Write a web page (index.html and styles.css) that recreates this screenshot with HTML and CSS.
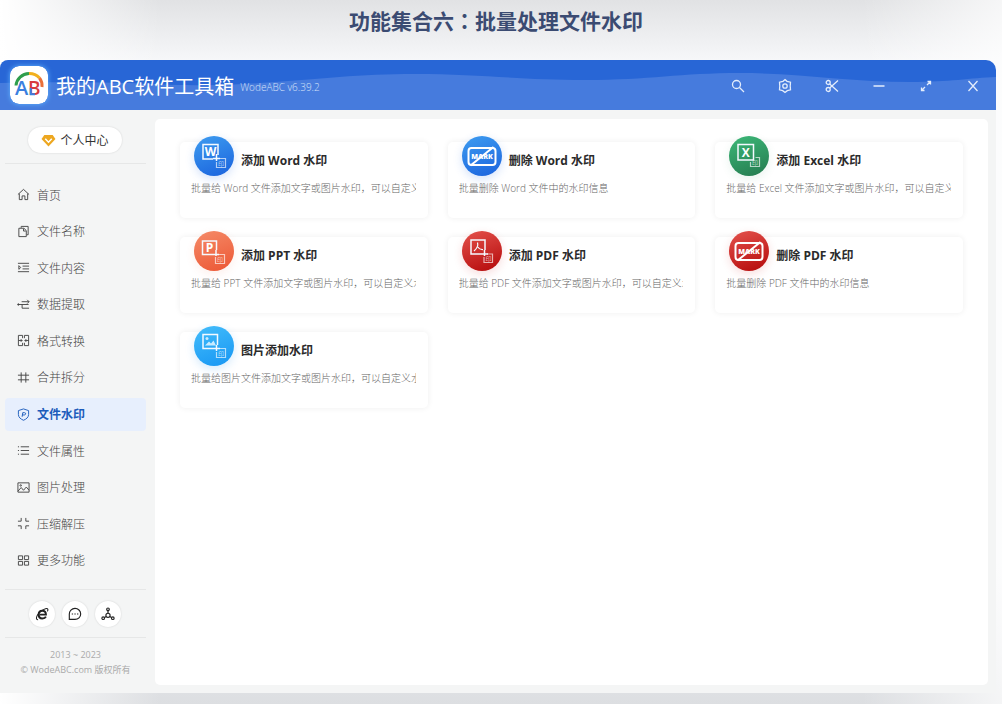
FILE: index.html
```html
<!DOCTYPE html>
<html lang="zh-CN">
<head>
  <meta charset="UTF-8">
  <meta name="viewport" content="width=device-width, initial-scale=1">
  <title>我的ABC软件工具箱</title>
  <link rel="stylesheet" href="styles.css">
</head>
<body>

  <h1 class="page-title">功能集合六<span class="colon" lang="zh-TW">：</span>批量处理文件水印</h1>

  <div class="window">
    <header class="titlebar">
      <svg class="wave" viewBox="0 0 996 50" preserveAspectRatio="none" aria-hidden="true">
        <path d="M0 23C60 22 90 22 130 23C190 26 220 26 260 23C320 19 360 14 415 14C480 14 520 20 585 20C650 20 680 13 740 13C800 13 850 22 910 22C950 22 970 18 996 17V50H0Z"/>
      </svg>
      <svg class="logo" viewBox="0 0 38 38" aria-hidden="true">
        <rect width="38" height="38" rx="9" fill="#fff"/>
        <g fill="none" stroke-width="3">
          <path d="M6 19.500A13.500 13 0 0 1 19 7.500" stroke="#2f9e4d"/>
          <path d="M19 7.500A13.500 13 0 0 1 29.500 12" stroke="#f2b01e"/>
          <path d="M29.500 12A13.500 13 0 0 1 32 21" stroke="#e8703a"/>
        </g>
        <text x="5" y="29" font-size="20" fill="#3b7fe0">A</text>
        <text x="18" y="29" font-size="19" fill="#d83b3f">B</text>
        <path d="M20.800 22V28.200H25" fill="none" stroke="#3b7fe0" stroke-width="2"/>
      </svg>
      <strong class="app-name">我的ABC软件工具箱</strong>
      <span class="version">WodeABC v6.39.2</span>
      <div class="tools">
        <button type="button" aria-label="搜索"><svg viewBox="0 0 16 16"><circle cx="6.500" cy="6.500" r="4"/><path d="M9.500 9.500L14 14"/></svg></button>
        <button type="button" aria-label="设置"><svg viewBox="0 0 16 16"><path d="M8 1.500L10 3.300L13.500 4.200L13.200 8L13.500 11.800L10.300 12.700L8 14.500L5.700 12.700L2.500 11.800L2.800 8L2.500 4.200L6 3.300Z"/><circle cx="8" cy="8" r="2.200"/></svg></button>
        <button type="button" aria-label="截图"><svg viewBox="0 0 16 16"><circle cx="4.200" cy="4.500" r="2"/><circle cx="4.200" cy="11.500" r="2"/><path d="M5.700 6L14 13.500M5.700 10L14 2.500"/></svg></button>
        <button type="button" aria-label="最小化"><svg viewBox="0 0 16 16"><path d="M2.500 8H13.500"/></svg></button>
        <button type="button" aria-label="最大化"><svg viewBox="0 0 16 16"><path d="M9.500 9.500" /><path d="M9.500 3.500H12.500V6.500M12.500 3.500L9 7M6.500 12.500H3.500V9.500M3.500 12.500L7 9"/></svg></button>
        <button type="button" aria-label="关闭"><svg viewBox="0 0 16 16"><path d="M3.500 3L12.500 13M12.500 3L3.500 13"/></svg></button>
      </div>
    </header>

    <div class="content">
      <aside class="sidebar">
        <div class="account">
          <button type="button" class="account-btn">
            <svg viewBox="0 0 16 14" aria-hidden="true"><path d="M3.500 1H12.500L15.500 5.500L8 13.500L0.500 5.500Z" fill="#eda720"/><path d="M4.500 5L8 8.800L11.500 5" fill="none" stroke="#fff" stroke-width="1.600"/></svg>
            个人中心
          </button>
        </div>

        <nav class="menu">
          <a href="#"><svg viewBox="0 0 14 14"><path d="M1 7L7 1.500L13 7M2.500 6V12.500H5.500V8.500H8.500V12.500H11.500V6"/></svg>首页</a>
          <a href="#"><svg viewBox="0 0 14 14"><path d="M4.500 3V1.500H12V10.500H10.500M2 3.500H7.500L10 6V12.500H2ZM7 4V6.500H9.500"/></svg>文件名称</a>
          <a href="#"><svg viewBox="0 0 14 14"><path d="M1 2.500H13M6 5.500H13M6 8.500H13M1 11.500H13M2 5L4 7L2 9Z"/></svg>文件内容</a>
          <a href="#"><svg viewBox="0 0 14 14"><path d="M1 7H12.500M5 4H13M11 2L13 4L11 6M5.500 7V11H13"/><circle cx="1.500" cy="7" r="0.800"/></svg>数据提取</a>
          <a href="#"><svg viewBox="0 0 14 14"><path d="M6 4.500V1.500H1.500V12.500H6V9.500M8 4.500V1.500H12.500V12.500H8V9.500M1.500 7H5.500M4 5.500L5.500 7L4 8.500M12.500 7H8.500M10 5.500L8.500 7L10 8.500"/></svg>格式转换</a>
          <a href="#"><svg viewBox="0 0 14 14"><path d="M4.500 1.500V12.500M9.500 1.500V12.500M1 4.500H13M1 9.500H13"/></svg>合并拆分</a>
          <a href="#" class="active" aria-current="page"><svg viewBox="0 0 14 14"><path d="M7 1L12.500 2.800V7C12.500 10 10 12 7 13.200C4 12 1.500 10 1.500 7V2.800ZM5.500 9.500L6.200 5H8C10 5 9.500 7.500 8 7.500H5.500"/></svg>文件水印</a>
          <a href="#"><svg viewBox="0 0 14 14"><path d="M4 3H13M4 7H13M4 11H13M1 3H2.200M1 7H2.200M1 11H2.200"/></svg>文件属性</a>
          <a href="#"><svg viewBox="0 0 14 14"><path d="M1 2H13V12H1ZM1 11L4.500 7L7 10L10 6.500L13 10"/><circle cx="4" cy="4.800" r="0.800"/></svg>图片处理</a>
          <a href="#"><svg viewBox="0 0 14 14"><path d="M4.500 1V4.500H1M9.500 1V4.500H13M4.500 13V9.500H1M9.500 13V9.500H13"/></svg>压缩解压</a>
          <a href="#"><svg viewBox="0 0 14 14"><path d="M1.500 2H6V6H1.500ZM8 2H12.500V6H8ZM1.500 8H6V12H1.500ZM8 8H12.500V12H8Z"/></svg>更多功能</a>
        </nav>

        <div class="links">
          <button type="button" aria-label="官网"><svg viewBox="0 0 16 16"><path d="M12.500 11C11.800 12.500 10.200 13.200 8.300 13.200C5.800 13.200 4.200 11.500 4.200 8.600C4.200 5.800 5.800 4.200 8.300 4.200C10.800 4.200 12.500 5.800 12.500 8.700H5.500" fill="none" stroke="#222" stroke-width="2.200"/><path d="M3.500 14.500C-1 15 3 5 12 2C15 1.300 15.500 3 14 5" fill="none" stroke="#222" stroke-width="1.200"/></svg></button>
          <button type="button" aria-label="客服"><svg viewBox="0 0 16 16"><path d="M1.500 14.200V8A6.500 6.300 0 1 1 8 14.200Z" fill="none" stroke="#222" stroke-width="1.300"/><path d="M4.300 8H5.800M7.300 8H8.800M10.300 8H11.800" stroke="#222" stroke-width="1.400"/></svg></button>
          <button type="button" aria-label="分享"><svg viewBox="0 0 16 16"><g fill="none" stroke="#222" stroke-width="1.300"><circle cx="8" cy="2.700" r="1.500"/><circle cx="2.500" cy="12.800" r="1.500"/><circle cx="13.500" cy="12.800" r="1.500"/><circle cx="8" cy="9.500" r="2.400"/><path d="M8 4V7M6 11L3.800 12M10 11L12.200 12"/></g></svg></button>
        </div>

        <footer class="copyright">
          <div>2013 ~ 2023</div>
          <div>© WodeABC.com 版权所有</div>
        </footer>
      </aside>

      <main class="panel">
        <article class="card">
          <div class="card-head">
            <svg class="badge word" viewBox="0 0 40 40" aria-hidden="true">
              <path class="frame" d="M24 19V8.500H9V23H19"/>
              <text class="letter" x="16.500" y="20">W</text>
              <path class="frame" d="M22.500 18V25M19 22.500H26"/>
              <path class="stamp" d="M26 22.500H31.500V31.500H22.500V26"/>
              <text class="seal" x="27" y="30">印</text>
            </svg>
            <h2>添加 Word 水印</h2>
          </div>
          <p>批量给 Word 文件添加文字或图片水印，可以自定义水印的位置</p>
        </article>

        <article class="card">
          <div class="card-head">
            <svg class="badge word" viewBox="0 0 40 40" aria-hidden="true">
              <rect class="mark-box" x="6.500" y="12" width="27" height="17" rx="3"/>
              <text class="mark" x="20" y="23">MARK</text>
              <path class="mark-box" d="M8.500 29.500L31.500 11"/>
            </svg>
            <h2>删除 Word 水印</h2>
          </div>
          <p>批量删除 Word 文件中的水印信息</p>
        </article>

        <article class="card">
          <div class="card-head">
            <svg class="badge excel" viewBox="0 0 40 40" aria-hidden="true">
              <path class="frame" d="M9 8.500H24.500V24H9Z"/>
              <text class="letter" x="16.800" y="21">X</text>
              <path class="stamp" d="M26.500 21.500H30.500V30.500H21.500V26"/>
              <text class="seal" x="26" y="29">印</text>
            </svg>
            <h2>添加 Excel 水印</h2>
          </div>
          <p>批量给 Excel 文件添加文字或图片水印，可以自定义水印的位置</p>
        </article>

        <article class="card">
          <div class="card-head">
            <svg class="badge ppt" viewBox="0 0 40 40" aria-hidden="true">
              <path class="frame" d="M22.500 19V10H8.500V23.500H19"/>
              <text class="letter" x="15.500" y="21">P</text>
              <path class="frame" d="M22 19V25M19 23.500H25"/>
              <path class="stamp" d="M25 23.500H30.500V32.500H21.500V26"/>
              <text class="seal" x="26" y="31">印</text>
            </svg>
            <h2>添加 PPT 水印</h2>
          </div>
          <p>批量给 PPT 文件添加文字或图片水印，可以自定义水印的位置</p>
        </article>

        <article class="card">
          <div class="card-head">
            <svg class="badge pdf" viewBox="0 0 40 40" aria-hidden="true">
              <path class="frame" d="M23 19V9H9V23H19"/>
              <path class="thin" d="M15.500 11.500C16.500 15 15.500 17 12 20M15.800 16C17 18 18.500 18.700 21 18.500"/>
              <path class="frame" d="M22.500 19V25M19 23H26"/>
              <path class="stamp" d="M25 23H30.500V31.500H22V26"/>
              <text class="seal" x="26.500" y="30">印</text>
            </svg>
            <h2>添加 PDF 水印</h2>
          </div>
          <p>批量给 PDF 文件添加文字或图片水印，可以自定义水印的位置</p>
        </article>

        <article class="card">
          <div class="card-head">
            <svg class="badge pdf" viewBox="0 0 40 40" aria-hidden="true">
              <rect class="mark-box" x="6.500" y="12" width="27" height="17" rx="3"/>
              <text class="mark" x="20" y="23">MARK</text>
              <path class="mark-box" d="M8.500 29.500L31.500 11"/>
            </svg>
            <h2>删除 PDF 水印</h2>
          </div>
          <p>批量删除 PDF 文件中的水印信息</p>
        </article>

        <article class="card">
          <div class="card-head">
            <svg class="badge image" viewBox="0 0 40 40" aria-hidden="true">
              <path class="frame" d="M23.500 19V8.500H9V22.500H19"/>
              <path d="M11 19.500L15 15.500L17 17.500L19.500 14.500L22 19.500Z" fill="#c9ebff"/>
              <circle cx="13" cy="12.500" r="1.500" fill="#c9ebff"/>
              <path class="frame" d="M22.500 19V25M19 22.500H26"/>
              <path class="stamp" d="M26 22.500H31.500V31.500H22.500V26"/>
              <text class="seal" x="27" y="30">印</text>
            </svg>
            <h2>图片添加水印</h2>
          </div>
          <p>批量给图片文件添加文字或图片水印，可以自定义水印的位置</p>
        </article>
      </main>
    </div>
  </div>

</body>
</html>
```
FILE: styles.css
```css
* {
  box-sizing: border-box;
}
body {
  display: flex;
  flex-direction: column;
  min-height: 100vh;
  margin: 0;
  padding: 0 6px 11px 0;
  font-family: "Open Sans", "Noto Sans CJK SC", sans-serif;
  font-size: 12px;
  color: #666;
  background:
    linear-gradient(to right, #fff, rgba(255,255,255,0) 16%, rgba(255,255,255,0) 86%, rgba(255,255,255,0.7)),
    linear-gradient(to bottom, #e1e2e4, #f6f7f9 60px, #f6f7f9 80%, #dcdee1);
}
button {
  font-family: inherit;
  border: none;
  padding: 0;
  cursor: pointer;
}
.page-title {
  height: 60px;
  margin: 0;
  padding: 5px 4px 0 0;
  font-size: 21px;
  line-height: 30px;
  text-align: center;
  color: #3b4b72;
}
.colon {
  font-family: "Noto Sans CJK TC", sans-serif;
}
.window {
  flex: 1;
  display: flex;
  flex-direction: column;
  border-radius: 8px 10px 0 0;
  overflow: hidden;
  background-color: #f4f5f5;
}

/* title bar */
.titlebar {
  position: relative;
  display: flex;
  align-items: center;
  height: 50px;
  padding: 0 11px 0 10px;
  background-color: #2866d6;
  color: #fff;
}
.wave {
  position: absolute;
  inset: 0;
  width: 100%;
  height: 100%;
  fill: #467bdd;
}
.logo, .app-name, .version, .tools {
  position: relative;
}
.logo {
  width: 38px;
  height: 38px;
  border-radius: 9px;
  box-shadow: 0 0 5px #5fb4ff;
  font-family: "Open Sans", sans-serif;
  font-weight: 600;
}
.app-name {
  margin-left: 8px;
  font-size: 20px;
  font-weight: 400;
}
.version {
  margin-left: 6px;
  padding-top: 3px;
  font-size: 10px;
  font-weight: 300;
  color: #d3e0f8;
}
.tools {
  display: flex;
  gap: 23px;
  margin-left: auto;
  padding-top: 2px;
}
.tools button {
  width: 24px;
  height: 24px;
  padding: 4px;
  background: none;
}
.tools svg {
  display: block;
  width: 16px;
  height: 16px;
  fill: none;
  stroke: #e3edfc;
  stroke-width: 1.3;
}

/* sidebar */
.content {
  flex: 1;
  display: flex;
  padding: 9px 8px 8px 0;
}
.sidebar {
  display: flex;
  flex-direction: column;
  width: 155px;
  padding: 0 9px 0 5px;
}
.account {
  padding: 8px 1px 10px 0;
  text-align: center;
  border-bottom: 1px solid #e6e7e7;
}
.account-btn {
  display: inline-flex;
  align-items: center;
  gap: 4px;
  height: 26px;
  padding: 0 13px;
  border-radius: 13px;
  font-size: 12px;
  color: #333;
  background-color: #fff;
  box-shadow: 0 0 2px rgba(0,0,0,0.15);
}
.account-btn svg {
  width: 15px;
  height: 13px;
}
.menu {
  flex: 1;
  display: flex;
  flex-direction: column;
  justify-content: space-between;
  padding: 14px 0 12px;
}
.menu a {
  display: flex;
  align-items: center;
  gap: 7px;
  height: 33px;
  padding-left: 12px;
  border-radius: 4px;
  font-weight: 300;
  color: #444;
  text-decoration: none;
}
.menu svg {
  width: 13px;
  height: 13px;
  fill: none;
  stroke: currentColor;
}
.menu .active {
  font-weight: 700;
  color: #1c5cbb;
  background-color: #e7effd;
}
.links {
  display: flex;
  justify-content: center;
  gap: 7px;
  padding: 11px 1px 10px 0;
  border-top: 1px solid #e6e7e7;
  border-bottom: 1px solid #e6e7e7;
}
.links button {
  display: flex;
  align-items: center;
  justify-content: center;
  width: 26px;
  height: 26px;
  border-radius: 50%;
  background-color: #fff;
  box-shadow: 0 0 2px rgba(0,0,0,0.15);
}
.links svg {
  width: 14px;
  height: 14px;
}
.copyright {
  padding: 9px 0 8px;
  font-size: 9px;
  line-height: 15px;
  text-align: center;
  color: #aaa;
}

/* function cards */
.panel {
  flex: 1;
  display: grid;
  grid-template-columns: repeat(3, minmax(0, 1fr));
  align-content: start;
  gap: 19px 20px;
  padding: 23px 25px;
  border-radius: 5px;
  background-color: #fff;
}
.card {
  height: 76px;
  padding: 0 12px 0 11px;
  border-radius: 5px;
  box-shadow: 0 0 6px rgba(0,0,0,0.07);
}
.card-head {
  display: flex;
  align-items: center;
  gap: 7px;
  margin-top: -6px;
  padding-left: 3px;
}
.card h2 {
  margin: 10px 0 0;
  font-size: 12px;
  line-height: 18px;
  color: #2b2b2b;
}
.card p {
  margin: 4px 0 0;
  font-size: 10px;
  font-weight: 300;
  line-height: 16px;
  white-space: nowrap;
  overflow: hidden;
  color: #666;
}
.badge {
  flex: none;
  width: 40px;
  height: 40px;
  border-radius: 50%;
  fill: none;
}
.word {
  background: linear-gradient(160deg, #3d9cf0, #1a62dd);
  box-shadow: 0 3px 10px rgba(40,110,230,0.2);
}
.excel {
  background: linear-gradient(160deg, #3cb878, #257a4f);
  box-shadow: 0 3px 10px rgba(40,140,90,0.1);
}
.ppt {
  background: linear-gradient(160deg, #f58b68, #ec5634);
  box-shadow: 0 3px 10px rgba(240,100,60,0.1);
}
.pdf {
  background: linear-gradient(160deg, #e4524c, #b4090a);
  box-shadow: 0 3px 10px rgba(210,30,30,0.15);
}
.image {
  background: linear-gradient(160deg, #43bdfb, #1796f3);
  box-shadow: 0 3px 10px rgba(40,150,240,0.2);
}
.frame {
  stroke: #f4f9ff;
  stroke-width: 1.5;
}
.thin {
  stroke: #f4f9ff;
  stroke-width: 1.2;
}
.stamp {
  stroke: rgba(255,255,255,0.65);
  stroke-width: 1.2;
}
.letter {
  font-size: 12px;
  font-weight: 700;
  text-anchor: middle;
  fill: #fff;
}
.seal {
  font-size: 6px;
  text-anchor: middle;
  fill: rgba(255,255,255,0.65);
}
.mark-box {
  stroke: #fff;
  stroke-width: 2;
}
.mark {
  font-size: 7px;
  font-weight: 800;
  text-anchor: middle;
  fill: #fff;
}
```
